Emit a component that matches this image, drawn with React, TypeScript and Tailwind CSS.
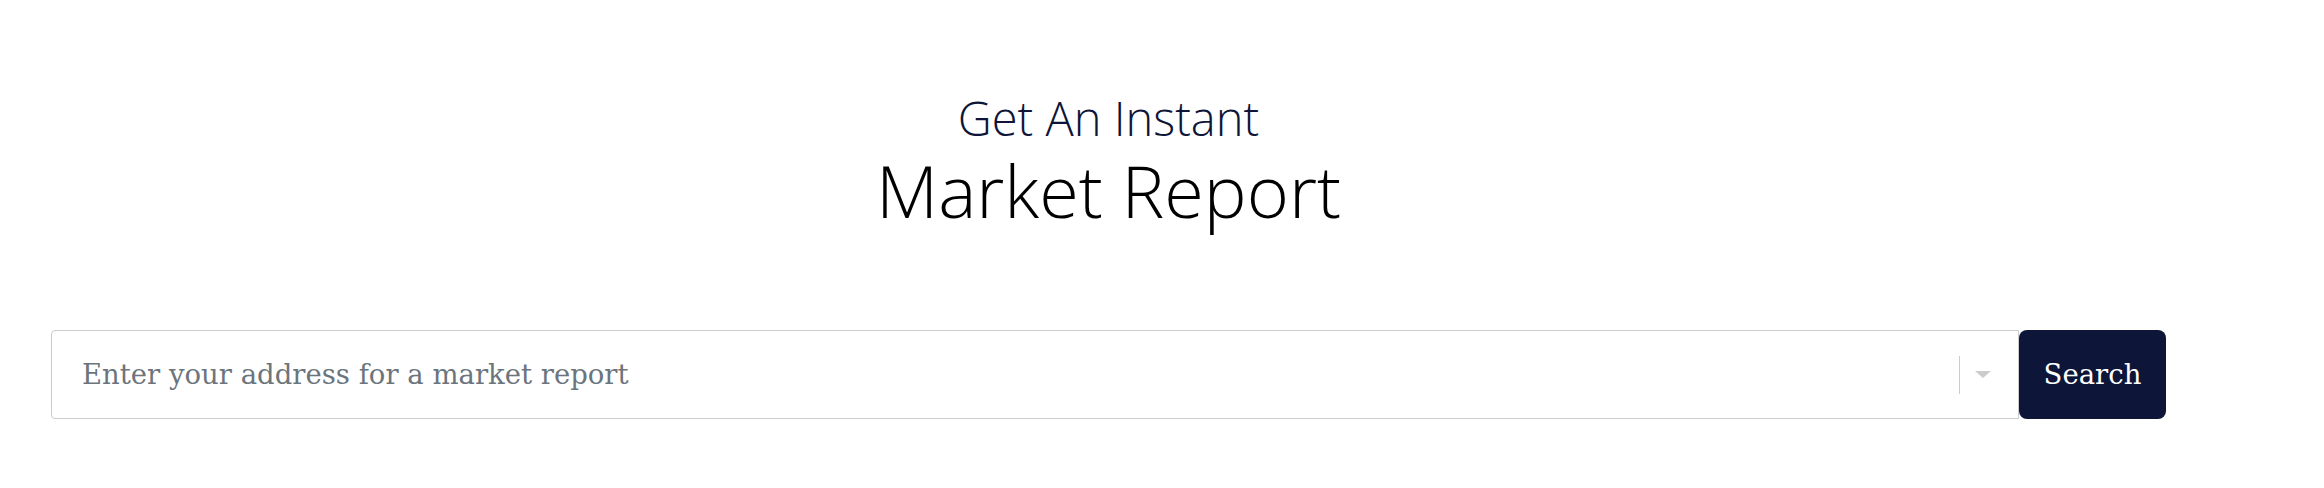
import React from "react";

export default function App() {
  return (
    <div className="w-full h-[488px] bg-white">
      <div className="ml-[51px] w-[2115px] pt-[95px]">
        <h2
          className="text-center text-[47px] leading-[47px] font-light text-[#0e1538]"
          style={{ fontFamily: '"Open Sans", sans-serif' }}
        >
          Get An Instant
        </h2>
        <h1
          className="mt-[12px] text-center text-[72px] leading-[72px] font-light text-black"
          style={{ fontFamily: '"Open Sans", sans-serif' }}
        >
          Market Report
        </h1>
        <div className="mt-[104px] flex h-[89px]">
          <div className="flex flex-1 items-center rounded-l-[4px] border border-[#cccccc] bg-white pl-[30px] pr-[27px]">
            <span
              className="flex-1 text-[27.5px] text-[#6c757d]"
              style={{ fontFamily: '"DejaVu Serif", serif' }}
            >
              Enter your address for a market report
            </span>
            <span className="h-[38px] w-px bg-[#cccccc]" />
            <svg className="ml-[15px] h-[7px] w-[16px]" viewBox="0 0 16 7">
              <path d="M0 0 L16 0 L8 7 Z" fill="#cccccc" />
            </svg>
          </div>
          <button
            className="w-[147px] rounded-[8px] bg-[#0d1538] text-[27.5px] text-white"
            style={{ fontFamily: '"DejaVu Serif", serif' }}
          >
            Search
          </button>
        </div>
      </div>
    </div>
  );
}
